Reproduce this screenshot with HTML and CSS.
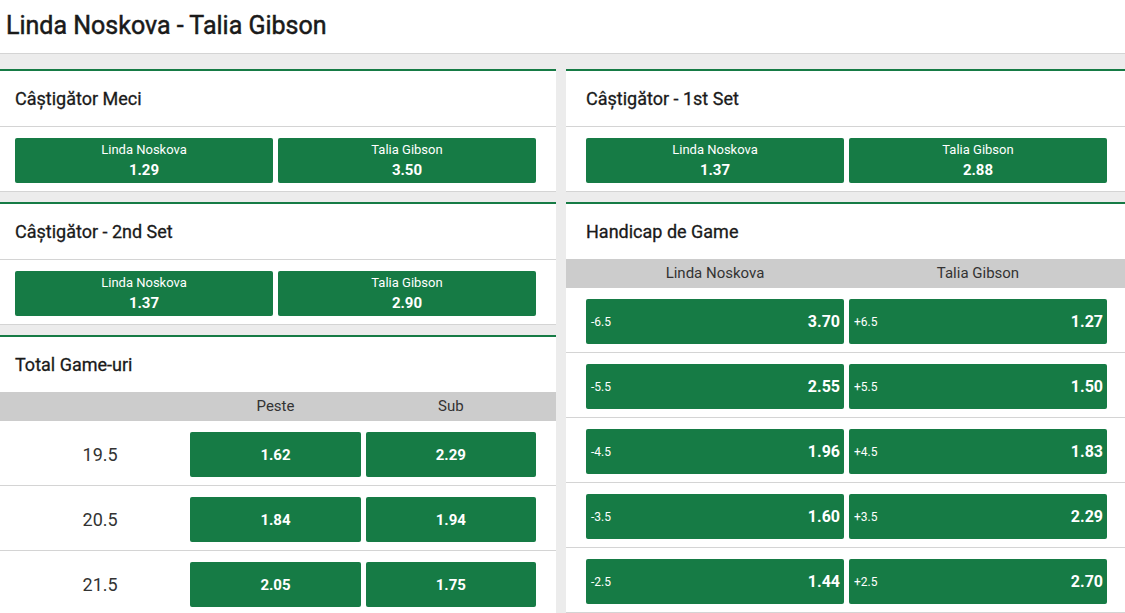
FILE: index.html
```html
<!DOCTYPE html>
<html lang="ro">
<head>
    <meta charset="UTF-8">
    <title>Linda Noskova - Talia Gibson</title>
    <link rel="stylesheet" href="styles.css">
</head>
<body>
    <div class="event-title">
        <h1>Linda Noskova - Talia Gibson</h1>
    </div>

    <div class="markets">
        <div class="market-col">
            <div class="market">
                <div class="market-name market-name-line">Câștigător Meci</div>
                <div class="market-body">
                    <button class="odd">
                        <span class="odd-label">Linda Noskova</span>
                        <span class="odd-value">1.29</span>
                    </button>
                    <button class="odd">
                        <span class="odd-label">Talia Gibson</span>
                        <span class="odd-value">3.50</span>
                    </button>
                </div>
            </div>

            <div class="market">
                <div class="market-name market-name-line">Câștigător - 2nd Set</div>
                <div class="market-body">
                    <button class="odd">
                        <span class="odd-label">Linda Noskova</span>
                        <span class="odd-value">1.37</span>
                    </button>
                    <button class="odd">
                        <span class="odd-label">Talia Gibson</span>
                        <span class="odd-value">2.90</span>
                    </button>
                </div>
            </div>

            <div class="market">
                <div class="market-name">Total Game-uri</div>
                <div class="table-head table-head-3">
                    <span></span>
                    <span>Peste</span>
                    <span>Sub</span>
                </div>
                <div class="table-row table-row-3">
                    <span class="line-value">19.5</span>
                    <button class="odd odd-single">1.62</button>
                    <button class="odd odd-single">2.29</button>
                </div>
                <div class="table-row table-row-3">
                    <span class="line-value">20.5</span>
                    <button class="odd odd-single">1.84</button>
                    <button class="odd odd-single">1.94</button>
                </div>
                <div class="table-row table-row-3">
                    <span class="line-value">21.5</span>
                    <button class="odd odd-single">2.05</button>
                    <button class="odd odd-single">1.75</button>
                </div>
            </div>
        </div>

        <div class="market-col">
            <div class="market">
                <div class="market-name market-name-line">Câștigător - 1st Set</div>
                <div class="market-body">
                    <button class="odd">
                        <span class="odd-label">Linda Noskova</span>
                        <span class="odd-value">1.37</span>
                    </button>
                    <button class="odd">
                        <span class="odd-label">Talia Gibson</span>
                        <span class="odd-value">2.88</span>
                    </button>
                </div>
            </div>

            <div class="market">
                <div class="market-name">Handicap de Game</div>
                <div class="table-head table-head-2">
                    <span>Linda Noskova</span>
                    <span>Talia Gibson</span>
                </div>
                <div class="table-row table-row-2">
                    <button class="odd odd-handicap"><span class="hcp">-6.5</span><span class="hcp-value">3.70</span></button>
                    <button class="odd odd-handicap"><span class="hcp">+6.5</span><span class="hcp-value">1.27</span></button>
                </div>
                <div class="table-row table-row-2">
                    <button class="odd odd-handicap"><span class="hcp">-5.5</span><span class="hcp-value">2.55</span></button>
                    <button class="odd odd-handicap"><span class="hcp">+5.5</span><span class="hcp-value">1.50</span></button>
                </div>
                <div class="table-row table-row-2">
                    <button class="odd odd-handicap"><span class="hcp">-4.5</span><span class="hcp-value">1.96</span></button>
                    <button class="odd odd-handicap"><span class="hcp">+4.5</span><span class="hcp-value">1.83</span></button>
                </div>
                <div class="table-row table-row-2">
                    <button class="odd odd-handicap"><span class="hcp">-3.5</span><span class="hcp-value">1.60</span></button>
                    <button class="odd odd-handicap"><span class="hcp">+3.5</span><span class="hcp-value">2.29</span></button>
                </div>
                <div class="table-row table-row-2">
                    <button class="odd odd-handicap"><span class="hcp">-2.5</span><span class="hcp-value">1.44</span></button>
                    <button class="odd odd-handicap"><span class="hcp">+2.5</span><span class="hcp-value">2.70</span></button>
                </div>
            </div>
        </div>
    </div>
</body>
</html>
```

FILE: styles.css
```css
body {
    font-family: Roboto, 'Liberation Sans', sans-serif;
    background-color: #ececec;
    color: #1a1a1a;
    margin: 0;
    overflow: hidden;
}
.event-title {
    background-color: #ffffff;
    border-bottom: 1px solid #d4d4d4;
    height: 53px;
    padding-left: 6px;
}
.event-title h1 {
    margin: 0;
    font-size: 25px;
    font-weight: 400;
    line-height: 52px;
    -webkit-text-stroke: 0.5px #1a1a1a;
}
.markets {
    display: grid;
    grid-template-columns: 561px 561px;
    gap: 10px;
    margin-left: -5px;
    padding-top: 15px;
}
.market-col {
    display: flex;
    flex-direction: column;
    gap: 10px;
}
.market {
    background-color: #ffffff;
    border-top: 2px solid #167b45;
}
.market-name {
    height: 55px;
    line-height: 56px;
    padding-left: 20px;
    font-size: 18px;
    font-weight: 400;
    -webkit-text-stroke: 0.3px #1a1a1a;
}
.market-name-line {
    border-bottom: 1px solid #d4d4d4;
}
.market-body {
    display: grid;
    grid-template-columns: 1fr 1fr;
    gap: 5px;
    padding: 11px 20px 8px;
    border-bottom: 1px solid #d4d4d4;
}
.odd {
    background-color: #167b45;
    color: #ffffff;
    border: none;
    border-radius: 2px;
    height: 45px;
    padding: 4px 4px 0;
    margin: 0;
    font-family: inherit;
    cursor: pointer;
    display: flex;
    flex-direction: column;
    align-items: center;
    justify-content: flex-start;
}
.odd-label {
    font-size: 13px;
    line-height: 16px;
}
.odd-value {
    font-size: 15px;
    font-weight: 700;
    line-height: 24px;
}
.odd-single {
    padding: 0 4px;
    justify-content: center;
    font-size: 15px;
    font-weight: 700;
}
.odd-handicap {
    flex-direction: row;
    align-items: center;
    justify-content: space-between;
    padding: 0 4px 0 5px;
}
.hcp {
    font-size: 12px;
}
.hcp-value {
    font-size: 16px;
    font-weight: 700;
}
.table-head {
    display: grid;
    gap: 5px;
    background-color: #cccccc;
    height: 29px;
    line-height: 29px;
    padding: 0 20px;
    font-size: 15px;
    color: #333333;
    text-align: center;
}
.table-head-3,
.table-row-3 {
    grid-template-columns: 1fr 1fr 1fr;
}
.table-head-2,
.table-row-2 {
    grid-template-columns: 1fr 1fr;
}
.table-row {
    display: grid;
    gap: 5px;
    align-items: center;
    padding: 11px 20px 8px;
    border-bottom: 1px solid #d4d4d4;
}
.line-value {
    text-align: center;
    font-size: 18px;
    color: #333333;
}
```
